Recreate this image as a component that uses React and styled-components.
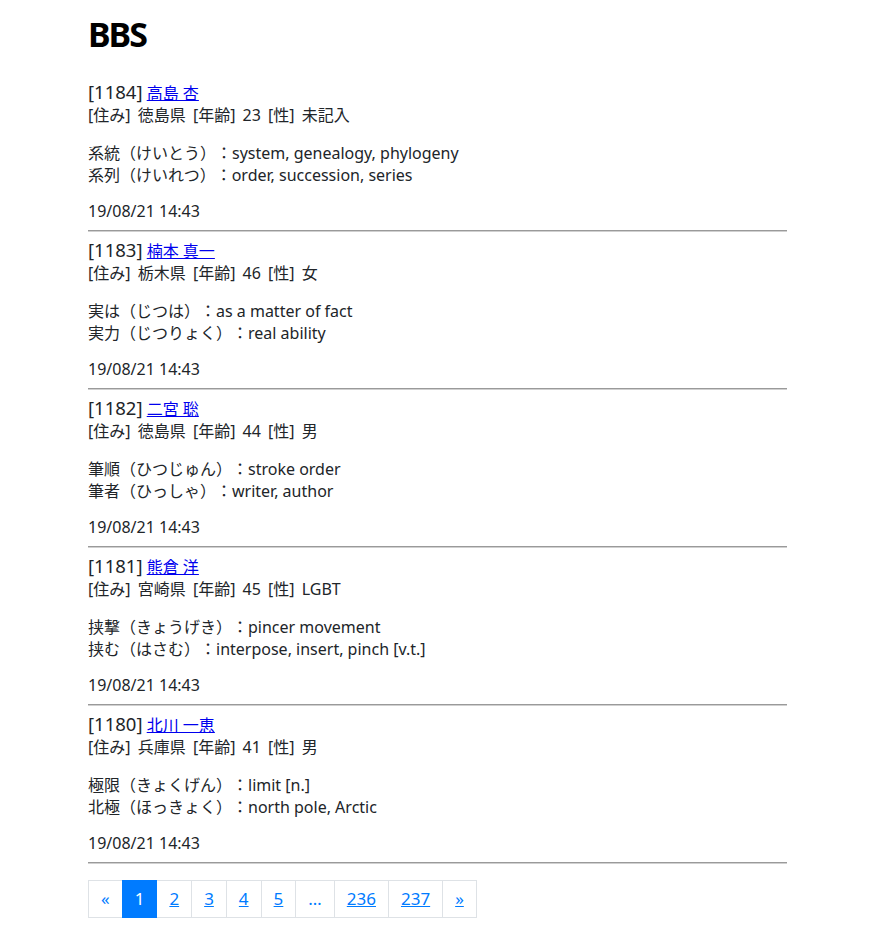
import React from 'react';
import styled, { createGlobalStyle } from 'styled-components';

const GlobalStyle = createGlobalStyle`
  body {
    margin: 0;
    background: #fff;
    color: #212529;
    font-family: "Noto Sans", "Noto Sans CJK JP", sans-serif;
    text-spacing-trim: space-all;
  }
`;

const Page = styled.div`
  width: 699px;
  margin-left: 88px;
  padding-top: 13px;
`;

const Title = styled.h1`
  margin: 0 0 27px;
  font-size: 34px;
  line-height: 42px;
  font-weight: 700;
  letter-spacing: -2px;
  color: #000;
`;

const Post = styled.article`
  font-size: 16px;
  line-height: 22px;
`;

const Head = styled.p`
  margin: 0 0 16px;
`;

const Num = styled.span`
  font-size: 18.5px;
  line-height: 14px;
`;

const Profile = styled.span`
  word-spacing: 3px;
`;

const NameLink = styled.a`
  color: #0000ee;
  text-decoration: underline;
`;

const Body = styled.p`
  margin: 0 0 14px;
`;

const Stamp = styled.p`
  margin: 0;
`;

const Rule = styled.hr`
  margin: 8px 0;
  border: 0;
  border-top: 1px solid #9a9a9a;
  border-bottom: 1px solid #d0d0d0;
  height: 0;
`;

const Pager = styled.ul`
  display: flex;
  list-style: none;
  margin: 16px 0 0;
  padding: 0;
`;

const PageItem = styled.li`
  & + & {
    margin-left: -1px;
  }
`;

const PageLink = styled.a`
  display: block;
  padding: 8px 12px;
  font-size: 17px;
  line-height: 20px;
  border: 1px solid ${p => (p.$active ? '#007bff' : '#dee2e6')};
  background: ${p => (p.$active ? '#007bff' : '#fff')};
  color: ${p => (p.$active ? '#fff' : '#007bff')};
  text-decoration: ${p => (p.$plain ? 'none' : 'underline')};
  position: relative;
  z-index: ${p => (p.$active ? 1 : 0)};
`;

const posts = [
  {
    id: 1184, name: '高島 杏', pref: '徳島県', age: 23, sex: '未記入',
    lines: ['系統（けいとう）：system, genealogy, phylogeny', '系列（けいれつ）：order, succession, series'],
  },
  {
    id: 1183, name: '楠本 真一', pref: '栃木県', age: 46, sex: '女',
    lines: ['実は（じつは）：as a matter of fact', '実力（じつりょく）：real ability'],
  },
  {
    id: 1182, name: '二宮 聡', pref: '徳島県', age: 44, sex: '男',
    lines: ['筆順（ひつじゅん）：stroke order', '筆者（ひっしゃ）：writer, author'],
  },
  {
    id: 1181, name: '熊倉 洋', pref: '宮崎県', age: 45, sex: 'LGBT',
    lines: ['挟撃（きょうげき）：pincer movement', '挟む（はさむ）：interpose, insert, pinch [v.t.]'],
  },
  {
    id: 1180, name: '北川 一恵', pref: '兵庫県', age: 41, sex: '男',
    lines: ['極限（きょくげん）：limit [n.]', '北極（ほっきょく）：north pole, Arctic'],
  },
];

const pages = [
  { label: '«', plain: true },
  { label: '1', active: true, plain: true },
  { label: '2' },
  { label: '3' },
  { label: '4' },
  { label: '5' },
  { label: '…', plain: true },
  { label: '236' },
  { label: '237' },
  { label: '»' },
];

export default function App() {
  return (
    <>
      <GlobalStyle />
      <Page>
        <Title>BBS</Title>
        {posts.map(p => (
          <Post key={p.id}>
            <Head>
              <Num>[{p.id}]</Num> <NameLink href="#">{p.name}</NameLink>
              <br />
              <Profile>[住み] {p.pref} [年齢] {p.age} [性] {p.sex}</Profile>
            </Head>
            <Body>
              {p.lines[0]}
              <br />
              {p.lines[1]}
            </Body>
            <Stamp>19/08/21 14:43</Stamp>
            <Rule />
          </Post>
        ))}
        <Pager>
          {pages.map(pg => (
            <PageItem key={pg.label}>
              <PageLink href="#" $active={pg.active} $plain={pg.plain}>{pg.label}</PageLink>
            </PageItem>
          ))}
        </Pager>
      </Page>
    </>
  );
}
